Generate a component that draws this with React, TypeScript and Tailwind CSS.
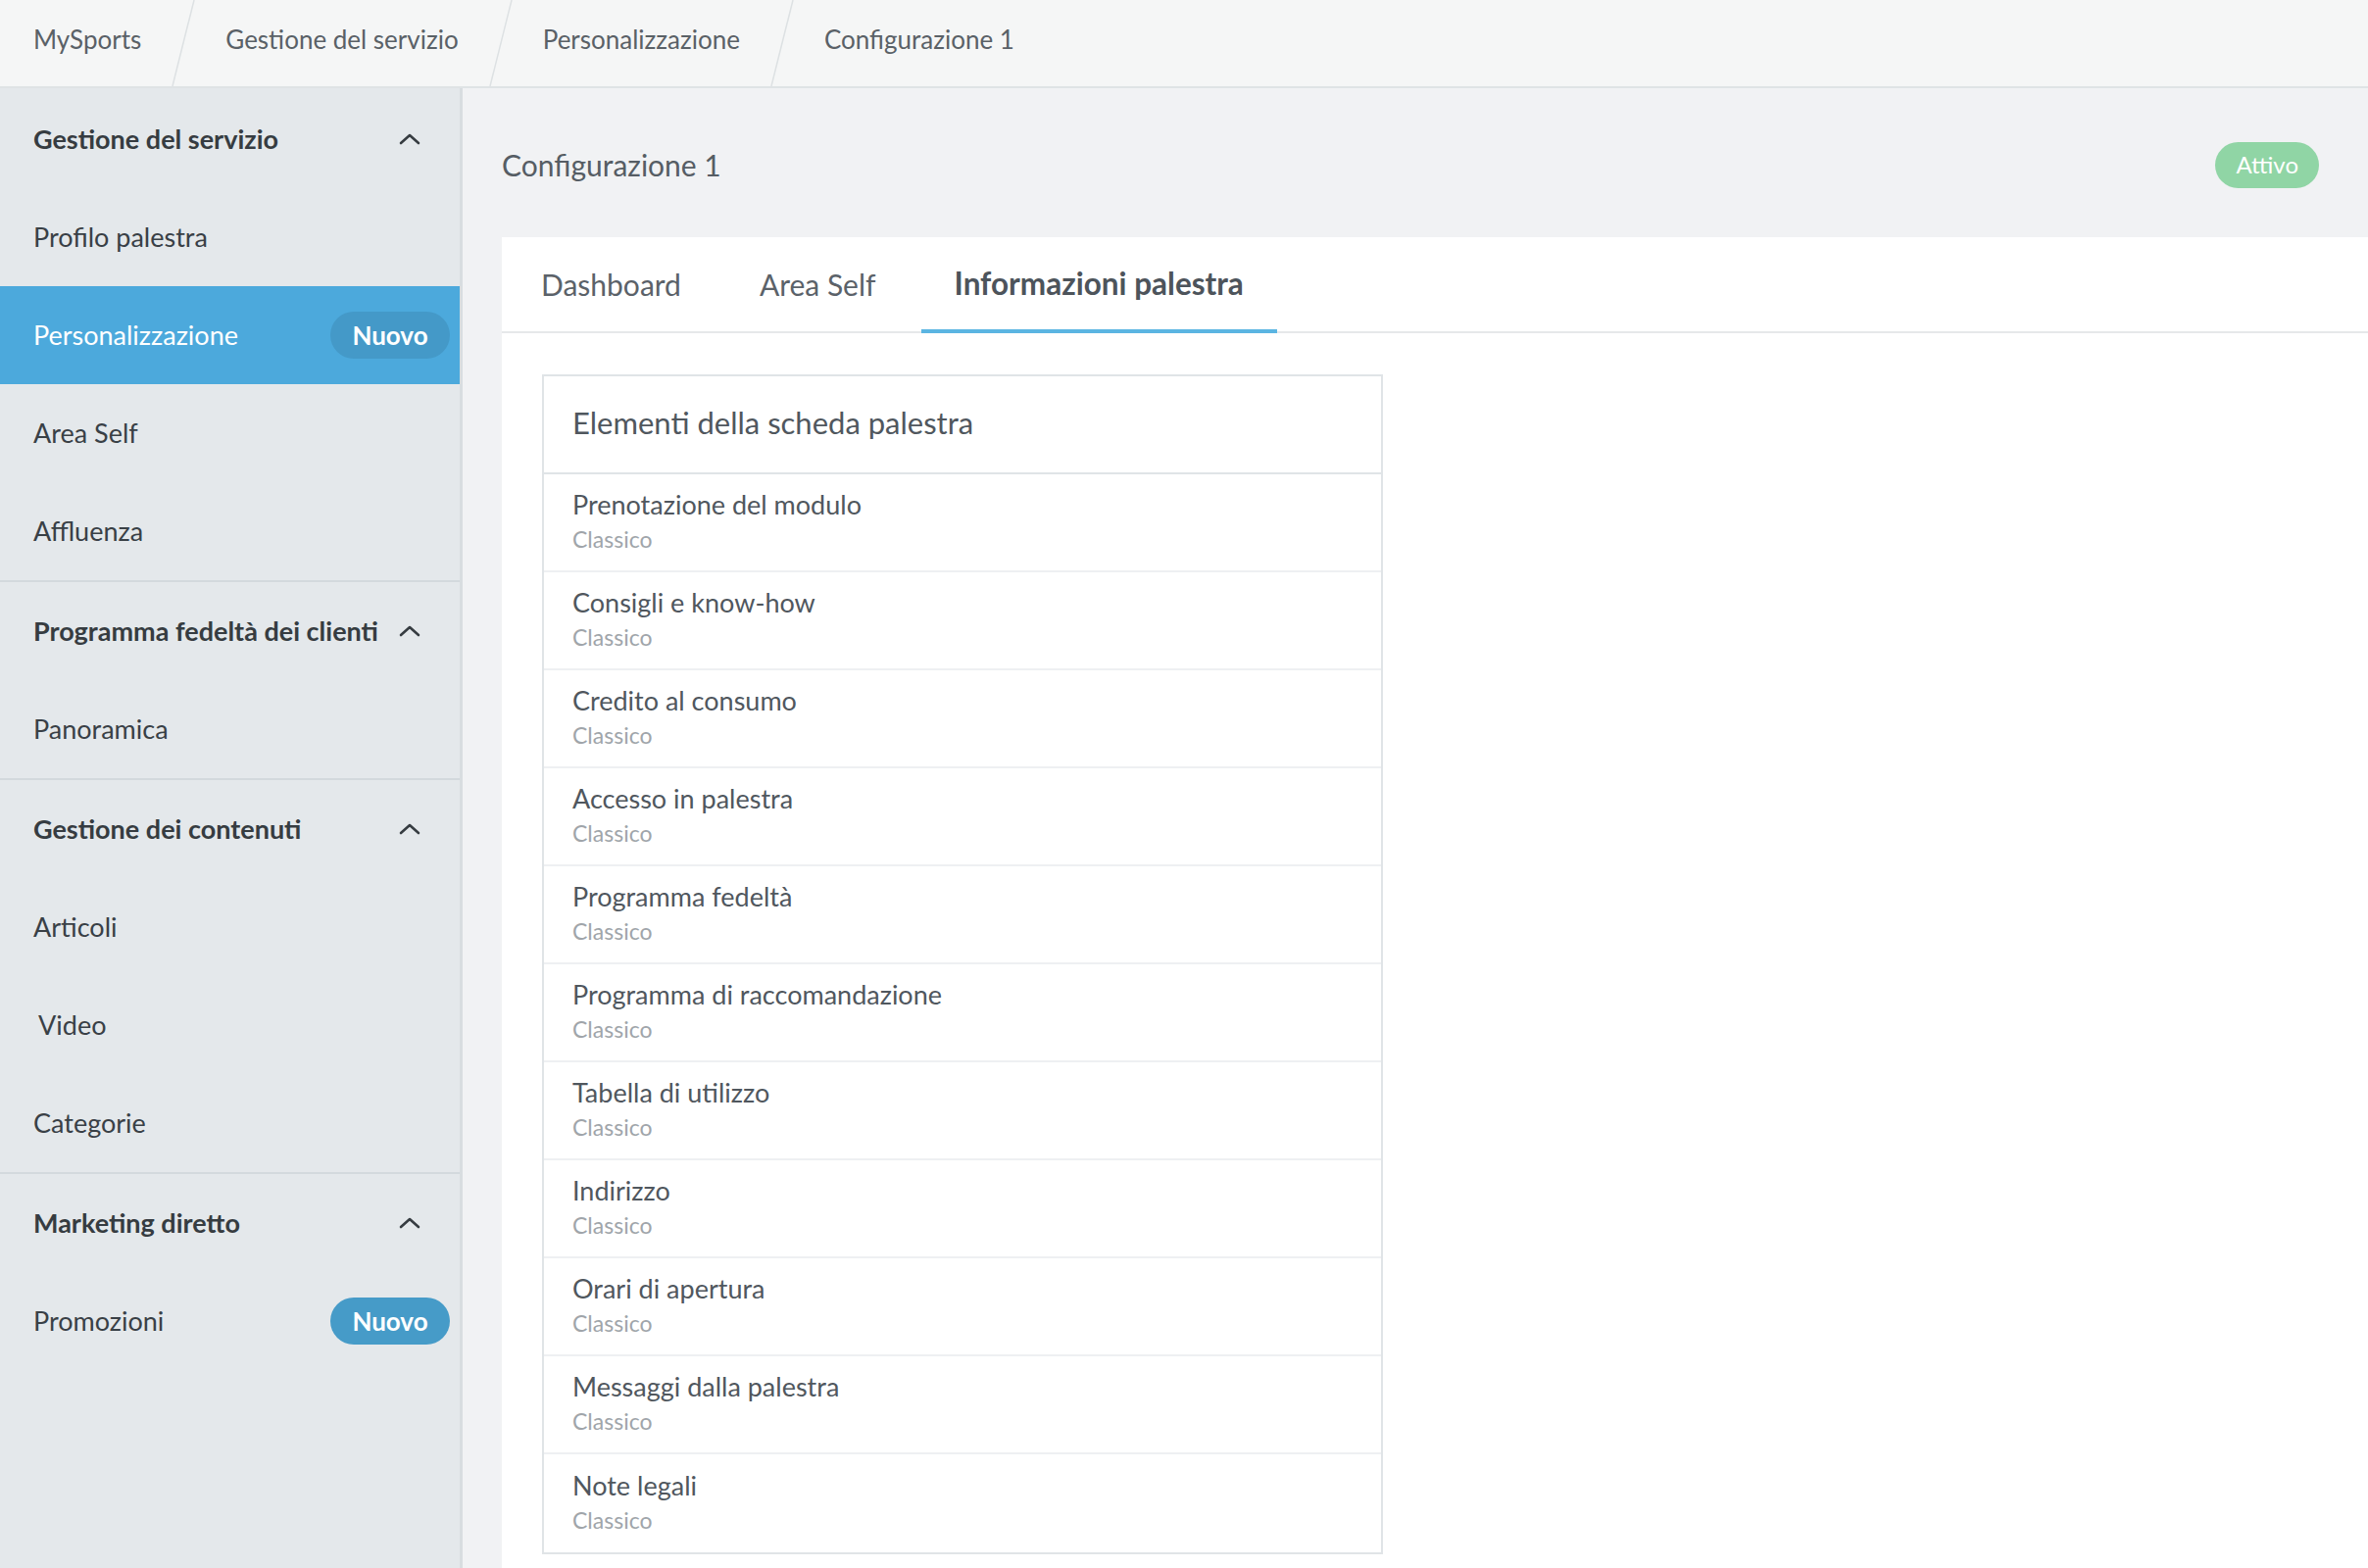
import React from 'react';

const crumbs = ['MySports', 'Gestione del servizio', 'Personalizzazione', 'Configurazione 1'];

const elements = [
  'Prenotazione del modulo',
  'Consigli e know-how',
  'Credito al consumo',
  'Accesso in palestra',
  'Programma fedeltà',
  'Programma di raccomandazione',
  'Tabella di utilizzo',
  'Indirizzo',
  'Orari di apertura',
  'Messaggi dalla palestra',
  'Note legali',
];

type NavGroup = {
  title: string;
  items: { label: string; active?: boolean; badge?: boolean; indent?: boolean }[];
};

const groups: NavGroup[] = [
  {
    title: 'Gestione del servizio',
    items: [
      { label: 'Profilo palestra' },
      { label: 'Personalizzazione', active: true, badge: true },
      { label: 'Area Self' },
      { label: 'Affluenza' },
    ],
  },
  {
    title: 'Programma fedeltà dei clienti',
    items: [{ label: 'Panoramica' }],
  },
  {
    title: 'Gestione dei contenuti',
    items: [{ label: 'Articoli' }, { label: 'Video', indent: true }, { label: 'Categorie' }],
  },
  {
    title: 'Marketing diretto',
    items: [{ label: 'Promozioni', badge: true }],
  },
];

function Chevron() {
  return (
    <svg width="22" height="14" viewBox="0 0 22 14" fill="none" stroke="currentColor">
      <polyline points="2,11 11,3 20,11" strokeWidth="2.6" strokeLinecap="round" strokeLinejoin="round" />
    </svg>
  );
}

function Separator() {
  return (
    <svg width="26" height="88" viewBox="0 0 26 88" className="shrink-0">
      <line x1="24" y1="0" x2="2" y2="88" stroke="#dde1e3" strokeWidth="1.5" />
    </svg>
  );
}

function Sidebar() {
  return (
    <aside className="w-[472px] shrink-0 bg-[#e4e8eb] border-r-[3px] border-[#d8dde0] flex flex-col">
      {groups.map((group, gi) => (
        <div key={group.title} className={gi > 0 ? 'border-t-2 border-[#d3d9dd]' : 'pt-[2px]'}>
          <div className="h-[100px] flex items-center justify-between pl-[34px] pr-[40px] text-[27px] font-bold text-[#363c41]">
            <span>{group.title}</span>
            <Chevron />
          </div>
          {group.items.map(item => (
            <div
              key={item.label}
              className={
                item.active
                  ? 'h-[100px] flex items-center justify-between pl-[34px] pr-[10px] bg-[#4ca9dc] text-white text-[27px]'
                  : 'h-[100px] flex items-center justify-between pl-[34px] pr-[10px] text-[#394046] text-[27px]'
              }
            >
              <span className={item.indent ? 'ml-[5px]' : ''}>{item.label}</span>
              {item.badge && (
                <span
                  className={
                    item.active
                      ? 'h-[48px] w-[122px] rounded-full bg-[#4499c8] flex items-center justify-center text-white font-bold text-[26px]'
                      : 'h-[48px] w-[122px] rounded-full bg-[#469bc8] flex items-center justify-center text-white font-bold text-[26px]'
                  }
                >
                  Nuovo
                </span>
              )}
            </div>
          ))}
        </div>
      ))}
    </aside>
  );
}

export default function App() {
  return (
    <div className="w-[2416px] h-[1600px] overflow-hidden flex flex-col font-['Lato',sans-serif] bg-[#f1f2f4]">
      {/* Breadcrumb bar */}
      <header className="h-[90px] shrink-0 bg-[#f5f6f6] border-b-2 border-[#dfe3e5] flex items-center text-[26px] text-[#5a6167]">
        <div className="flex items-center h-full pl-[34px]">
          {crumbs.map((c, i) => (
            <React.Fragment key={c}>
              {i > 0 && <Separator />}
              <span className={i === 0 ? 'pr-[30px] pb-[8px]' : 'px-[30px] pb-[8px]'}>{c}</span>
            </React.Fragment>
          ))}
        </div>
      </header>

      <div className="flex flex-1 min-h-0">
        <Sidebar />

        <main className="flex-1 flex flex-col pl-[40px]">
          <div className="h-[152px] shrink-0 flex items-center justify-between pr-[50px] pt-[4px]">
            <h1 className="text-[30px] text-[#565d64]">Configurazione 1</h1>
            <span className="h-[47px] px-[21px] rounded-full bg-[#90d5a5] text-white text-[24px] flex items-center">
              Attivo
            </span>
          </div>

          <section className="flex-1 bg-white">
            <nav className="h-[98px] border-b-2 border-[#e6e8ea] flex items-stretch pl-[6px] gap-[12px] text-[30px]">
              <div className="px-[34px] flex items-center text-[#5b6269]">Dashboard</div>
              <div className="px-[34px] flex items-center text-[#5b6269]">Area Self</div>
              <div className="relative px-[34px] flex items-center font-bold text-[31.5px] text-[#4d545b]">
                Informazioni palestra
                <span className="absolute left-0 right-0 -bottom-[2px] h-[4px] bg-[#5bb5e2]" />
              </div>
            </nav>

            <div className="ml-[41px] mt-[42px] w-[858px] border-2 border-[#e0e4e7]">
              <div className="h-[100px] flex items-center px-[29px] pb-[4px] border-b-2 border-[#e0e4e7] text-[31px] text-[#50575e]">
                Elementi della scheda palestra
              </div>
              {elements.map((el, i) => (
                <div
                  key={el}
                  className={
                    i < elements.length - 1
                      ? 'h-[100px] flex flex-col justify-center px-[29px] pb-[2px] border-b-2 border-[#eef0f2]'
                      : 'h-[100px] flex flex-col justify-center px-[29px] pb-[2px]'
                  }
                >
                  <div className="text-[27px] leading-[36px] text-[#50575e]">{el}</div>
                  <div className="text-[23px] leading-[34px] text-[#a0a5aa]">Classico</div>
                </div>
              ))}
            </div>
          </section>
        </main>
      </div>
    </div>
  );
}
